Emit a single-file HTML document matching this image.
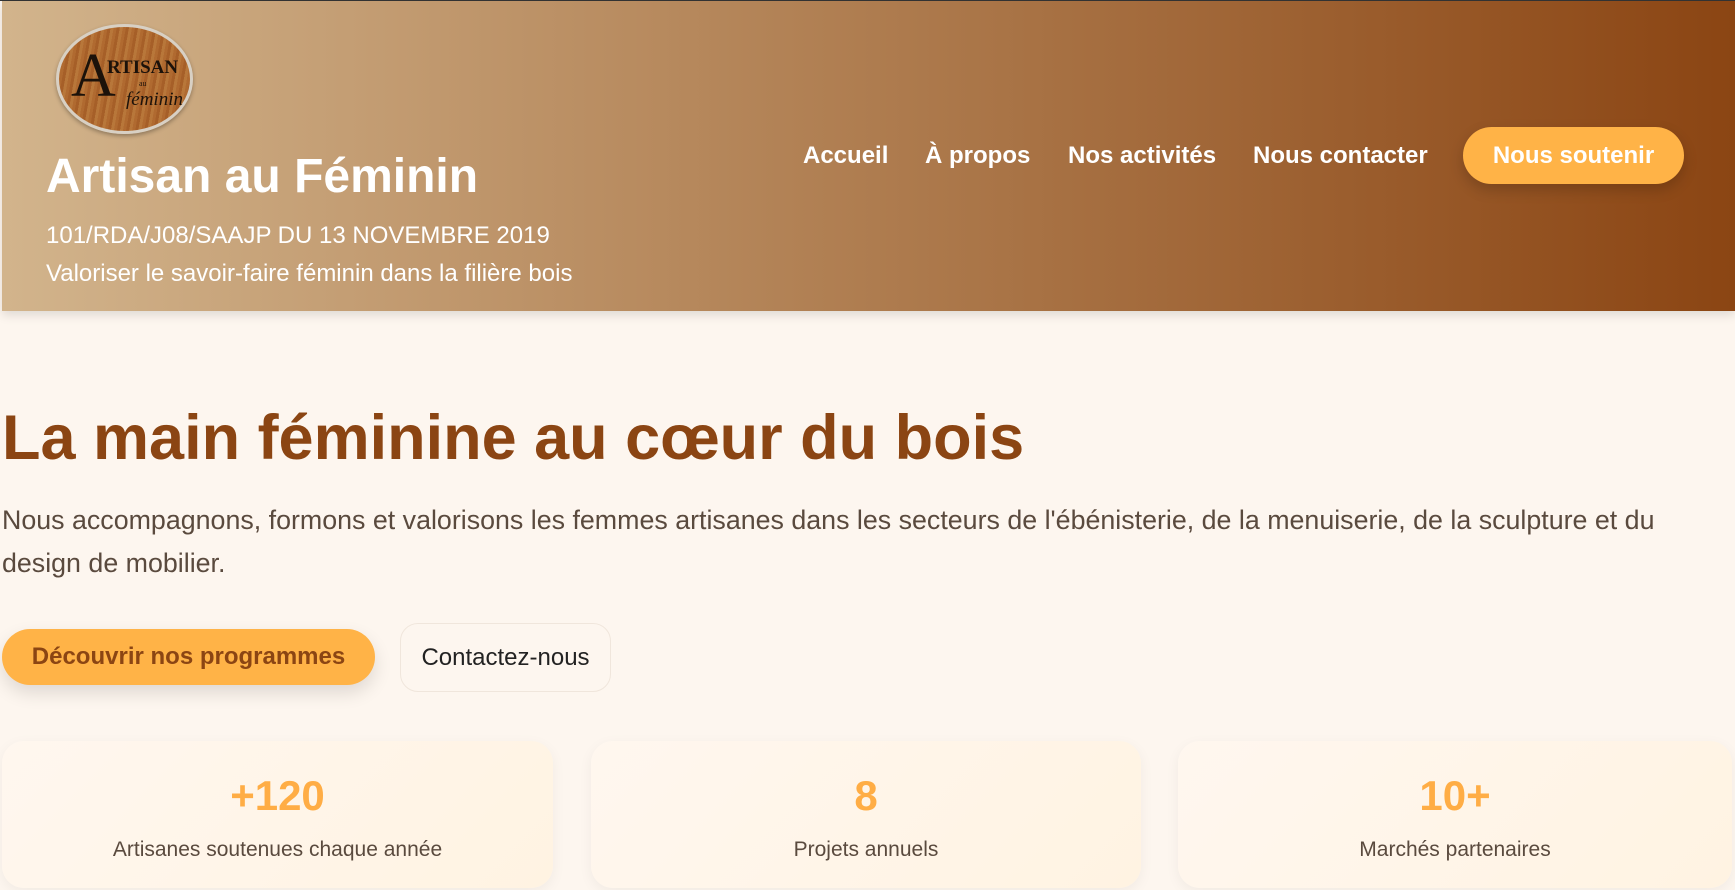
<!DOCTYPE html>
<html><head><meta charset="utf-8"><style>
*{margin:0;padding:0;box-sizing:border-box}
body{width:1735px;height:890px;overflow:hidden;background:#fdf6ef;font-family:"Liberation Sans",sans-serif;position:relative}
.hdr{position:absolute;left:2px;top:1px;width:1733px;height:310px;background:linear-gradient(90deg,#d2b48c,#8b4513);box-shadow:0 4px 10px rgba(0,0,0,.12)}
body:before{content:"";position:absolute;left:0;top:0;width:1735px;height:1px;background:#333}
.logo{position:absolute;left:54px;top:23px;width:137px;height:110px;border-radius:50%;background:repeating-linear-gradient(100deg,#b06a30 0 3px,#a65f28 3px 6px,#b8773a 6px 9px);border:3px solid #d8d0c4;box-shadow:0 2px 4px rgba(0,0,0,.3)}
.logo span{position:absolute;font-family:"Liberation Serif",serif;color:#1c120a}
.t{position:absolute;color:#fff}
.nav{position:absolute;top:141px;color:#fff;font-weight:bold;font-size:24px}
.btn{position:absolute;border-radius:30px;display:flex;align-items:center;justify-content:center}
.card{position:absolute;top:741px;height:147px;border-radius:22px;background:linear-gradient(135deg,#fff7ef,#fff3e2);box-shadow:0 4px 14px rgba(0,0,0,.05);text-align:center}
.card b{display:block;margin-top:31px;font-size:42px;color:#ffad45}
.card p{margin-top:18px;font-size:21px;color:#5a4a3e}
</style></head><body>
<div class="hdr">
<div class="logo"><span style="left:12px;top:14px;font-size:62px">A</span><span style="left:48px;top:30px;font-size:19px;font-weight:bold">RTISAN</span><span style="left:80px;top:52px;font-size:8px">au</span><span style="left:67px;top:62px;font-size:19px;font-style:italic">féminin</span></div>
<div class="t" style="left:44px;top:148px;font-size:48px;font-weight:bold">Artisan au Féminin</div>
<div class="t" style="left:44px;top:221px;font-size:24px">101/RDA/J08/SAAJP DU 13 NOVEMBRE 2019</div>
<div class="t" style="left:44px;top:259px;font-size:24px">Valoriser le savoir-faire féminin dans la filière bois</div>
<div class="nav" style="left:801px">Accueil</div>
<div class="nav" style="left:923px">À propos</div>
<div class="nav" style="left:1066px">Nos activités</div>
<div class="nav" style="left:1251px">Nous contacter</div>
<div class="btn" style="left:1461px;top:126px;width:221px;height:57px;background:#ffb347;color:#fff;font-weight:bold;font-size:24px;box-shadow:0 6px 14px rgba(0,0,0,.18)">Nous soutenir</div>
</div>
<div style="position:absolute;left:2px;top:402px;font-size:63px;font-weight:bold;color:#8b4513">La main féminine au cœur du bois</div>
<div style="position:absolute;left:2px;top:499px;width:1700px;font-size:26.8px;line-height:43px;color:#5a4a3e">Nous accompagnons, formons et valorisons les femmes artisanes dans les secteurs de l'ébénisterie, de la menuiserie, de la sculpture et du design de mobilier.</div>
<div class="btn" style="left:2px;top:629px;width:373px;height:56px;background:#ffb347;color:#8b4513;font-weight:bold;font-size:24px;box-shadow:0 8px 18px rgba(0,0,0,.12)">Découvrir nos programmes</div>
<div class="btn" style="left:400px;top:623px;width:211px;height:69px;border-radius:18px;border:1px solid #f0e6dc;color:#222;font-size:24px">Contactez-nous</div>
<div class="card" style="left:2px;width:551px"><b>+120</b><p>Artisanes soutenues chaque année</p></div>
<div class="card" style="left:591px;width:550px"><b>8</b><p>Projets annuels</p></div>
<div class="card" style="left:1178px;width:554px"><b>10+</b><p>Marchés partenaires</p></div>
</body></html>
